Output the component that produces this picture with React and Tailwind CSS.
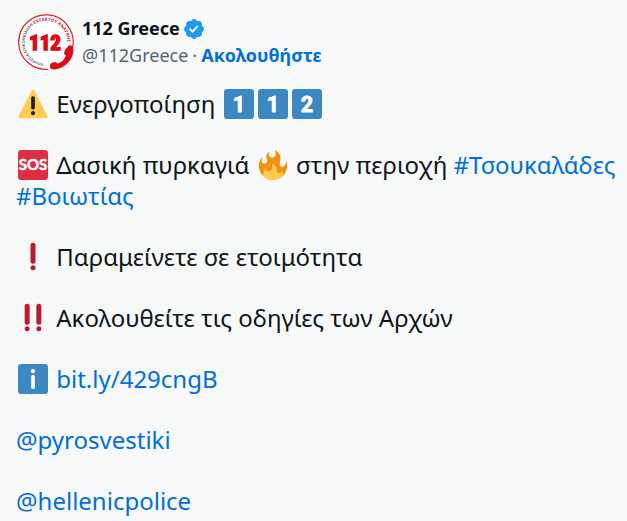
import React from "react";

const Emoji = ({ label, children }) => (
  <svg viewBox="0 0 36 36" role="img" aria-label={label} className="mx-0.5 inline-block size-[30px] align-[-6px]">
    {children}
  </svg>
);

const Keycap = ({ digit }) => (
  <Emoji label={`keycap ${digit}`}>
    <rect width="36" height="36" rx="4" fill="#3B88C3" />
    <text x="18" y="27" textAnchor="middle" fontSize="26" fill="#fff" stroke="#fff" strokeWidth="1" strokeLinejoin="round" className="font-['Roboto',sans-serif] font-bold">
      {digit}
    </text>
  </Emoji>
);

const Warning = () => (
  <Emoji label="warning">
    <path
      fill="#FFCC4D"
      d="M2.653 35C.811 35-.001 33.662.847 32.027L16.456 1.972c.849-1.635 2.238-1.635 3.087 0l15.609 30.056c.85 1.634.037 2.972-1.805 2.972H2.653z"
    />
    <path
      fill="#231F20"
      d="M15.583 28.953c0-1.333 1.085-2.418 2.419-2.418 1.333 0 2.418 1.085 2.418 2.418 0 1.334-1.086 2.419-2.418 2.419-1.334 0-2.419-1.085-2.419-2.419zm.186-18.293c0-1.302.961-2.108 2.232-2.108 1.241 0 2.233.837 2.233 2.108v11.938c0 1.271-.992 2.108-2.233 2.108-1.271 0-2.232-.807-2.232-2.108V10.66z"
    />
  </Emoji>
);

const Sos = () => (
  <Emoji label="SOS">
    <rect width="36" height="36" rx="4" fill="#DD2E44" />
    <text x="18" y="24" textAnchor="middle" fontSize="18" fill="#fff" stroke="#fff" strokeWidth="0.6" className="font-['Lato',sans-serif] font-bold">
      SOS
    </text>
  </Emoji>
);

const Fire = () => (
  <Emoji label="fire">
    <path
      fill="#F4900C"
      d="M35 19c0-2.062-.367-4.039-1.04-5.868-.46 5.389-3.333 8.157-6.335 6.868-2.812-1.208-.917-5.917-.777-8.164.236-3.809-.012-8.169-6.931-11.794 2.875 5.5.333 8.917-2.333 9.125-2.958.231-5.667-2.542-4.667-7.042-3.238 2.386-3.332 6.402-2.333 9 1.042 2.708-.042 4.958-2.583 5.208-2.84.28-4.418-3.041-2.963-8.333C2.52 10.965 1 14.805 1 19c0 9.389 7.611 17 17 17s17-7.611 17-17z"
    />
    <path
      fill="#FFCC4D"
      d="M28.394 23.999c.148 3.084-2.561 4.293-4.019 3.709-2.106-.843-1.541-2.291-2.083-5.291s-2.625-5.083-5.708-6c2.25 6.333-1.247 8.667-3.08 9.084-1.872.426-3.753-.001-3.968-4.007C7.352 23.668 6 26.676 6 30c0 .368.023.73.055 1.09C9.125 34.124 13.342 36 18 36s8.875-1.876 11.945-4.91c.032-.36.055-.722.055-1.09 0-2.187-.584-4.236-1.606-6.001z"
    />
  </Emoji>
);

const Exclamation = () => (
  <Emoji label="exclamation">
    <rect x="15" y="1" width="6" height="25" rx="3" fill="#BE1931" />
    <circle cx="18" cy="31" r="3" fill="#BE1931" />
  </Emoji>
);

const DoubleExclamation = () => (
  <Emoji label="double exclamation">
    <rect x="8" y="1" width="6" height="25" rx="3" fill="#BE1931" />
    <circle cx="11" cy="31" r="3" fill="#BE1931" />
    <rect x="22" y="1" width="6" height="25" rx="3" fill="#BE1931" />
    <circle cx="25" cy="31" r="3" fill="#BE1931" />
  </Emoji>
);

const Info = () => (
  <Emoji label="information">
    <rect width="36" height="36" rx="4" fill="#3B88C3" />
    <circle cx="18" cy="8.5" r="2.6" fill="#fff" />
    <rect x="15.8" y="13" width="4.4" height="17" rx="2.2" fill="#fff" />
  </Emoji>
);

const Verified = () => (
  <svg viewBox="1.5 1.5 19 19" role="img" aria-label="Verified" className="size-5">
    <path
      fill="#1D9BF0"
      d="M20.396 11c-.018-.646-.215-1.275-.57-1.816-.354-.54-.852-.972-1.438-1.246.223-.607.27-1.264.14-1.897-.131-.634-.437-1.218-.882-1.687-.47-.445-1.053-.75-1.687-.882-.633-.13-1.29-.083-1.897.14-.273-.587-.704-1.086-1.245-1.44S11.647 1.62 11 1.604c-.646.017-1.273.213-1.813.568s-.969.854-1.24 1.44c-.608-.223-1.267-.272-1.902-.14-.635.13-1.22.436-1.69.882-.445.47-.749 1.055-.878 1.688-.13.633-.08 1.29.144 1.896-.587.274-1.087.705-1.443 1.245-.356.54-.555 1.17-.574 1.817.02.647.218 1.276.574 1.817.356.54.856.972 1.443 1.245-.224.606-.274 1.263-.144 1.896.13.634.433 1.218.877 1.688.47.443 1.054.747 1.687.878.633.132 1.29.084 1.897-.136.274.586.705 1.084 1.246 1.439.54.354 1.17.551 1.816.569.647-.016 1.276-.213 1.817-.567s.972-.854 1.245-1.44c.604.239 1.266.296 1.903.164.636-.132 1.22-.447 1.68-.907.46-.46.776-1.044.908-1.681s.075-1.299-.165-1.903c.586-.274 1.084-.705 1.439-1.246.354-.54.551-1.17.569-1.816zM9.662 14.85l-3.429-3.428 1.293-1.302 2.072 2.072 4.4-4.794 1.347 1.246z"
    />
  </svg>
);

const Logo = () => (
  <svg viewBox="0 0 112 112" role="img" aria-label="112 Greece" className="size-14 shrink-0">
    <circle cx="56" cy="56" r="55" fill="#fff" />
    <path d="M61 110.5A54.5 54.5 0 1 1 109.5 66" fill="none" stroke="#D8232A" strokeWidth="2.5" />
    {/* text runs clockwise round the ring, starting at the bottom */}
    <path id="ring" d="M52 98.5A42.5 42.5 0 1 1 98.5 56A42.5 42.5 0 0 1 96 70" fill="none" />
    <text fontSize="8" className="font-['Open_Sans',sans-serif] font-semibold">
      <textPath href="#ring" startOffset="1">
        <tspan fill="#444">ΥΠΗΡΕΣΙΑ ΕΠΙΚΟΙΝΩΝΙΩΝ </tspan>
        <tspan fill="#D8232A" fontSize="9" fontWeight="700">
          ΕΚΤΑΚΤΟΥ ΑΝΑΓΚΗΣ
        </tspan>
      </textPath>
    </text>
    <text x="54" y="71" textAnchor="middle" fontSize="42" fill="#E30613" stroke="#E30613" strokeWidth="3" className="font-['Liberation_Sans_Narrow','Roboto_Condensed','Roboto',sans-serif] font-bold">
      112
    </text>
    <path
      fill="#E30613"
      d="M100 65c3-4 9-3 10 2 4 17-10 38-32 43-6 2-13 1-14-3-1-5 1-9 6-10 4-1 7-1 9 2 8-2 14-8 17-16-3-2-5-4-3-8 1-4 4-7 7-10z"
    />
  </svg>
);

const Link = ({ href, children }) => (
  <a href={href} className="text-[#006fd6]">
    {children}
  </a>
);

const App = () => {
  return (
    <article className="min-h-screen bg-[#f7f9f9] pt-3.5 pl-4 font-['Noto_Sans',sans-serif] text-[#0f1419]">
      <header className="flex items-center gap-2 pl-0.5">
        <Logo />
        <div className="text-lg leading-[27px]">
          <div className="flex items-center gap-1">
            <span className="font-bold">112 Greece</span>
            <Verified />
          </div>
          <div className="flex gap-1 text-[#536471]">
            <span>@112Greece</span>
            <span>·</span>
            <a href="#follow" className="font-bold text-[#006fd6]">
              Ακολουθήστε
            </a>
          </div>
        </div>
      </header>

      <div className="mt-[18px] flex flex-col gap-[30px] text-2xl leading-[31px]">
        <p>
          <Warning /> Ενεργοποίηση <Keycap digit="1" />
          <Keycap digit="1" />
          <Keycap digit="2" />
        </p>
        <p>
          <Sos /> Δασική πυρκαγιά <Fire /> στην περιοχή <Link href="#tsoukalades">#Τσουκαλάδες</Link>{" "}
          <Link href="#viotias">#Βοιωτίας</Link>
        </p>
        <p>
          <Exclamation /> Παραμείνετε σε ετοιμότητα
        </p>
        <p>
          <DoubleExclamation /> Ακολουθείτε τις οδηγίες των Αρχών
        </p>
        <p>
          <Info /> <Link href="#info">bit.ly/429cngB</Link>
        </p>
        <p>
          <Link href="#pyrosvestiki">@pyrosvestiki</Link>
        </p>
        <p>
          <Link href="#hellenicpolice">@hellenicpolice</Link>
        </p>
      </div>
    </article>
  );
};

export default App;
